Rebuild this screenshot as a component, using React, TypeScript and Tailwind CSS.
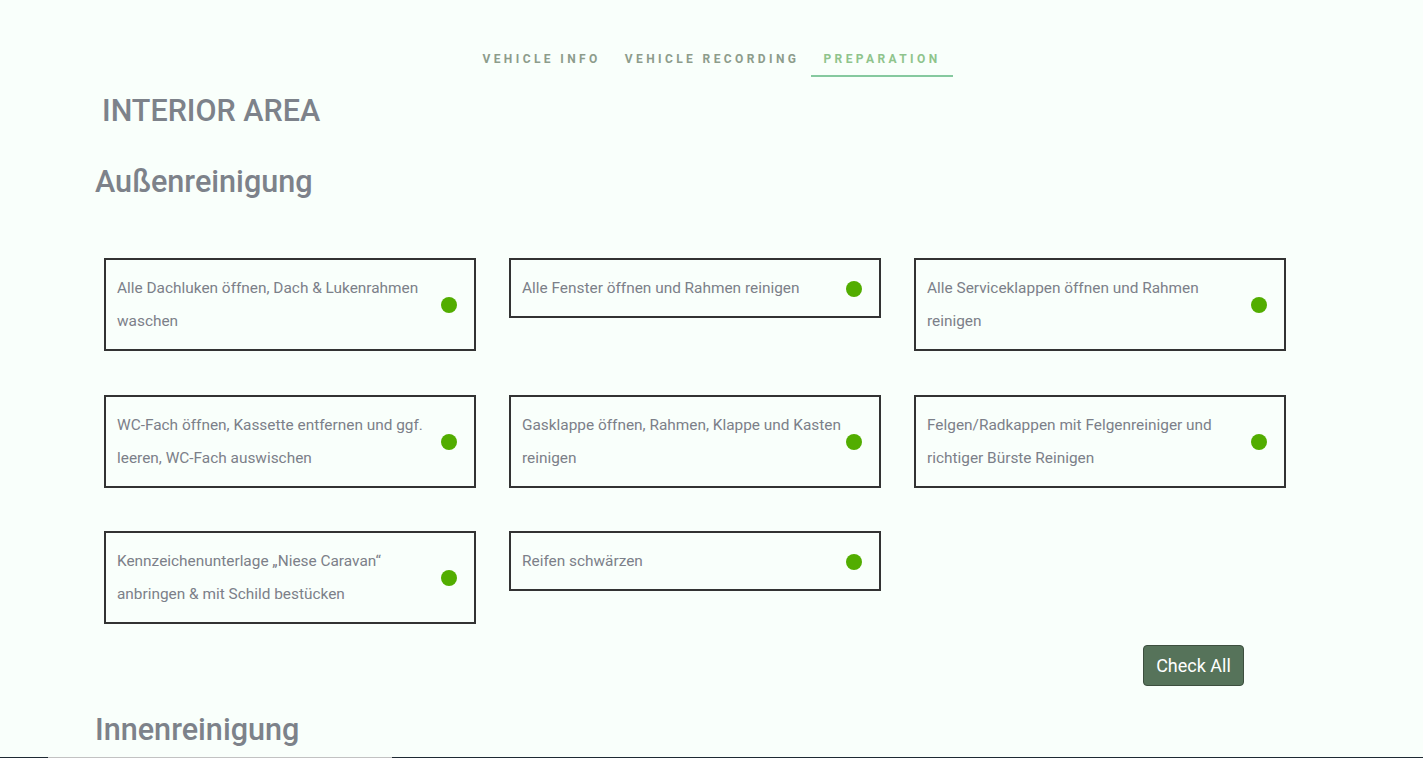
import React from "react"

const tabs = [
  { label: "VEHICLE INFO", active: false },
  { label: "VEHICLE RECORDING", active: false },
  { label: "PREPARATION", active: true },
]

const tasks = [
  "Alle Dachluken öffnen, Dach & Lukenrahmen waschen",
  "Alle Fenster öffnen und Rahmen reinigen",
  "Alle Serviceklappen öffnen und Rahmen reinigen",
  "WC-Fach öffnen, Kassette entfernen und ggf. leeren, WC-Fach auswischen",
  "Gasklappe öffnen, Rahmen, Klappe und Kasten reinigen",
  "Felgen/Radkappen mit Felgenreiniger und richtiger Bürste Reinigen",
  "Kennzeichenunterlage „Niese Caravan“ anbringen & mit Schild bestücken",
  "Reifen schwärzen",
]

function TaskCard({ text }: { text: string }) {
  return (
    <div className="flex items-center border-2 border-[#333333] pt-[12px] pb-[11px] pl-[11px] pr-[17px]">
      <p className="flex-1 text-[15.4px] leading-[33px] text-[#7c8089]">{text}</p>
      <span className="h-4 w-4 shrink-0 rounded-full bg-[#52ad00]" />
    </div>
  )
}

export default function App() {
  return (
    <div className="min-h-screen bg-[#f9fffb] font-['Roboto',sans-serif]">
      {/* Tabs */}
      <nav className="flex justify-center pt-[51px]">
        {tabs.map((t) => (
          <div
            key={t.label}
            className={
              t.active
                ? "border-b-2 border-[#86c99f] px-3 pb-[8px] text-[12px] font-bold leading-[16px] tracking-[3.4px] text-[#8fc48c]"
                : "border-b-2 border-transparent px-3 pb-[8px] text-[12px] font-bold leading-[16px] tracking-[3.4px] text-[#8d9c8b]"
            }
          >
            {t.label}
          </div>
        ))}
      </nav>

      <div className="pl-[95px]">
        <h1 className="ml-[7px] mt-[16px] text-[30.5px] font-medium leading-[36px] text-[#7d828a]">INTERIOR AREA</h1>
        <h2 className="mt-[35px] text-[30.6px] font-medium leading-[36px] text-[#7d828a]">Außenreinigung</h2>

        {/* Task cards */}
        <div className="ml-[9px] mt-[58px] grid w-[1182px] grid-cols-3 items-start gap-x-[33px] gap-y-[43.5px]">
          {tasks.map((t) => (
            <TaskCard key={t} text={t} />
          ))}
        </div>

        <div className="ml-[9px] mt-[21px] flex w-[1182px] justify-end pr-[42px]">
          <button className="h-[41px] w-[101px] rounded-[4px] border border-[#3d4f3f] bg-[#56735a] text-[18px] text-white">
            Check All
          </button>
        </div>

        <h2 className="mt-[26px] text-[30.6px] font-medium leading-[36px] text-[#7d828a]">Innenreinigung</h2>
      </div>

      {/* edge of the next block */}
      <div className="mt-[9px] flex h-[2px]">
        <div className="w-[48px] bg-[#1e2a33]" />
        <div className="w-[344px] bg-[#c2c2c2]" />
        <div className="flex-1 bg-[#1e2a33]" />
      </div>
    </div>
  )
}
